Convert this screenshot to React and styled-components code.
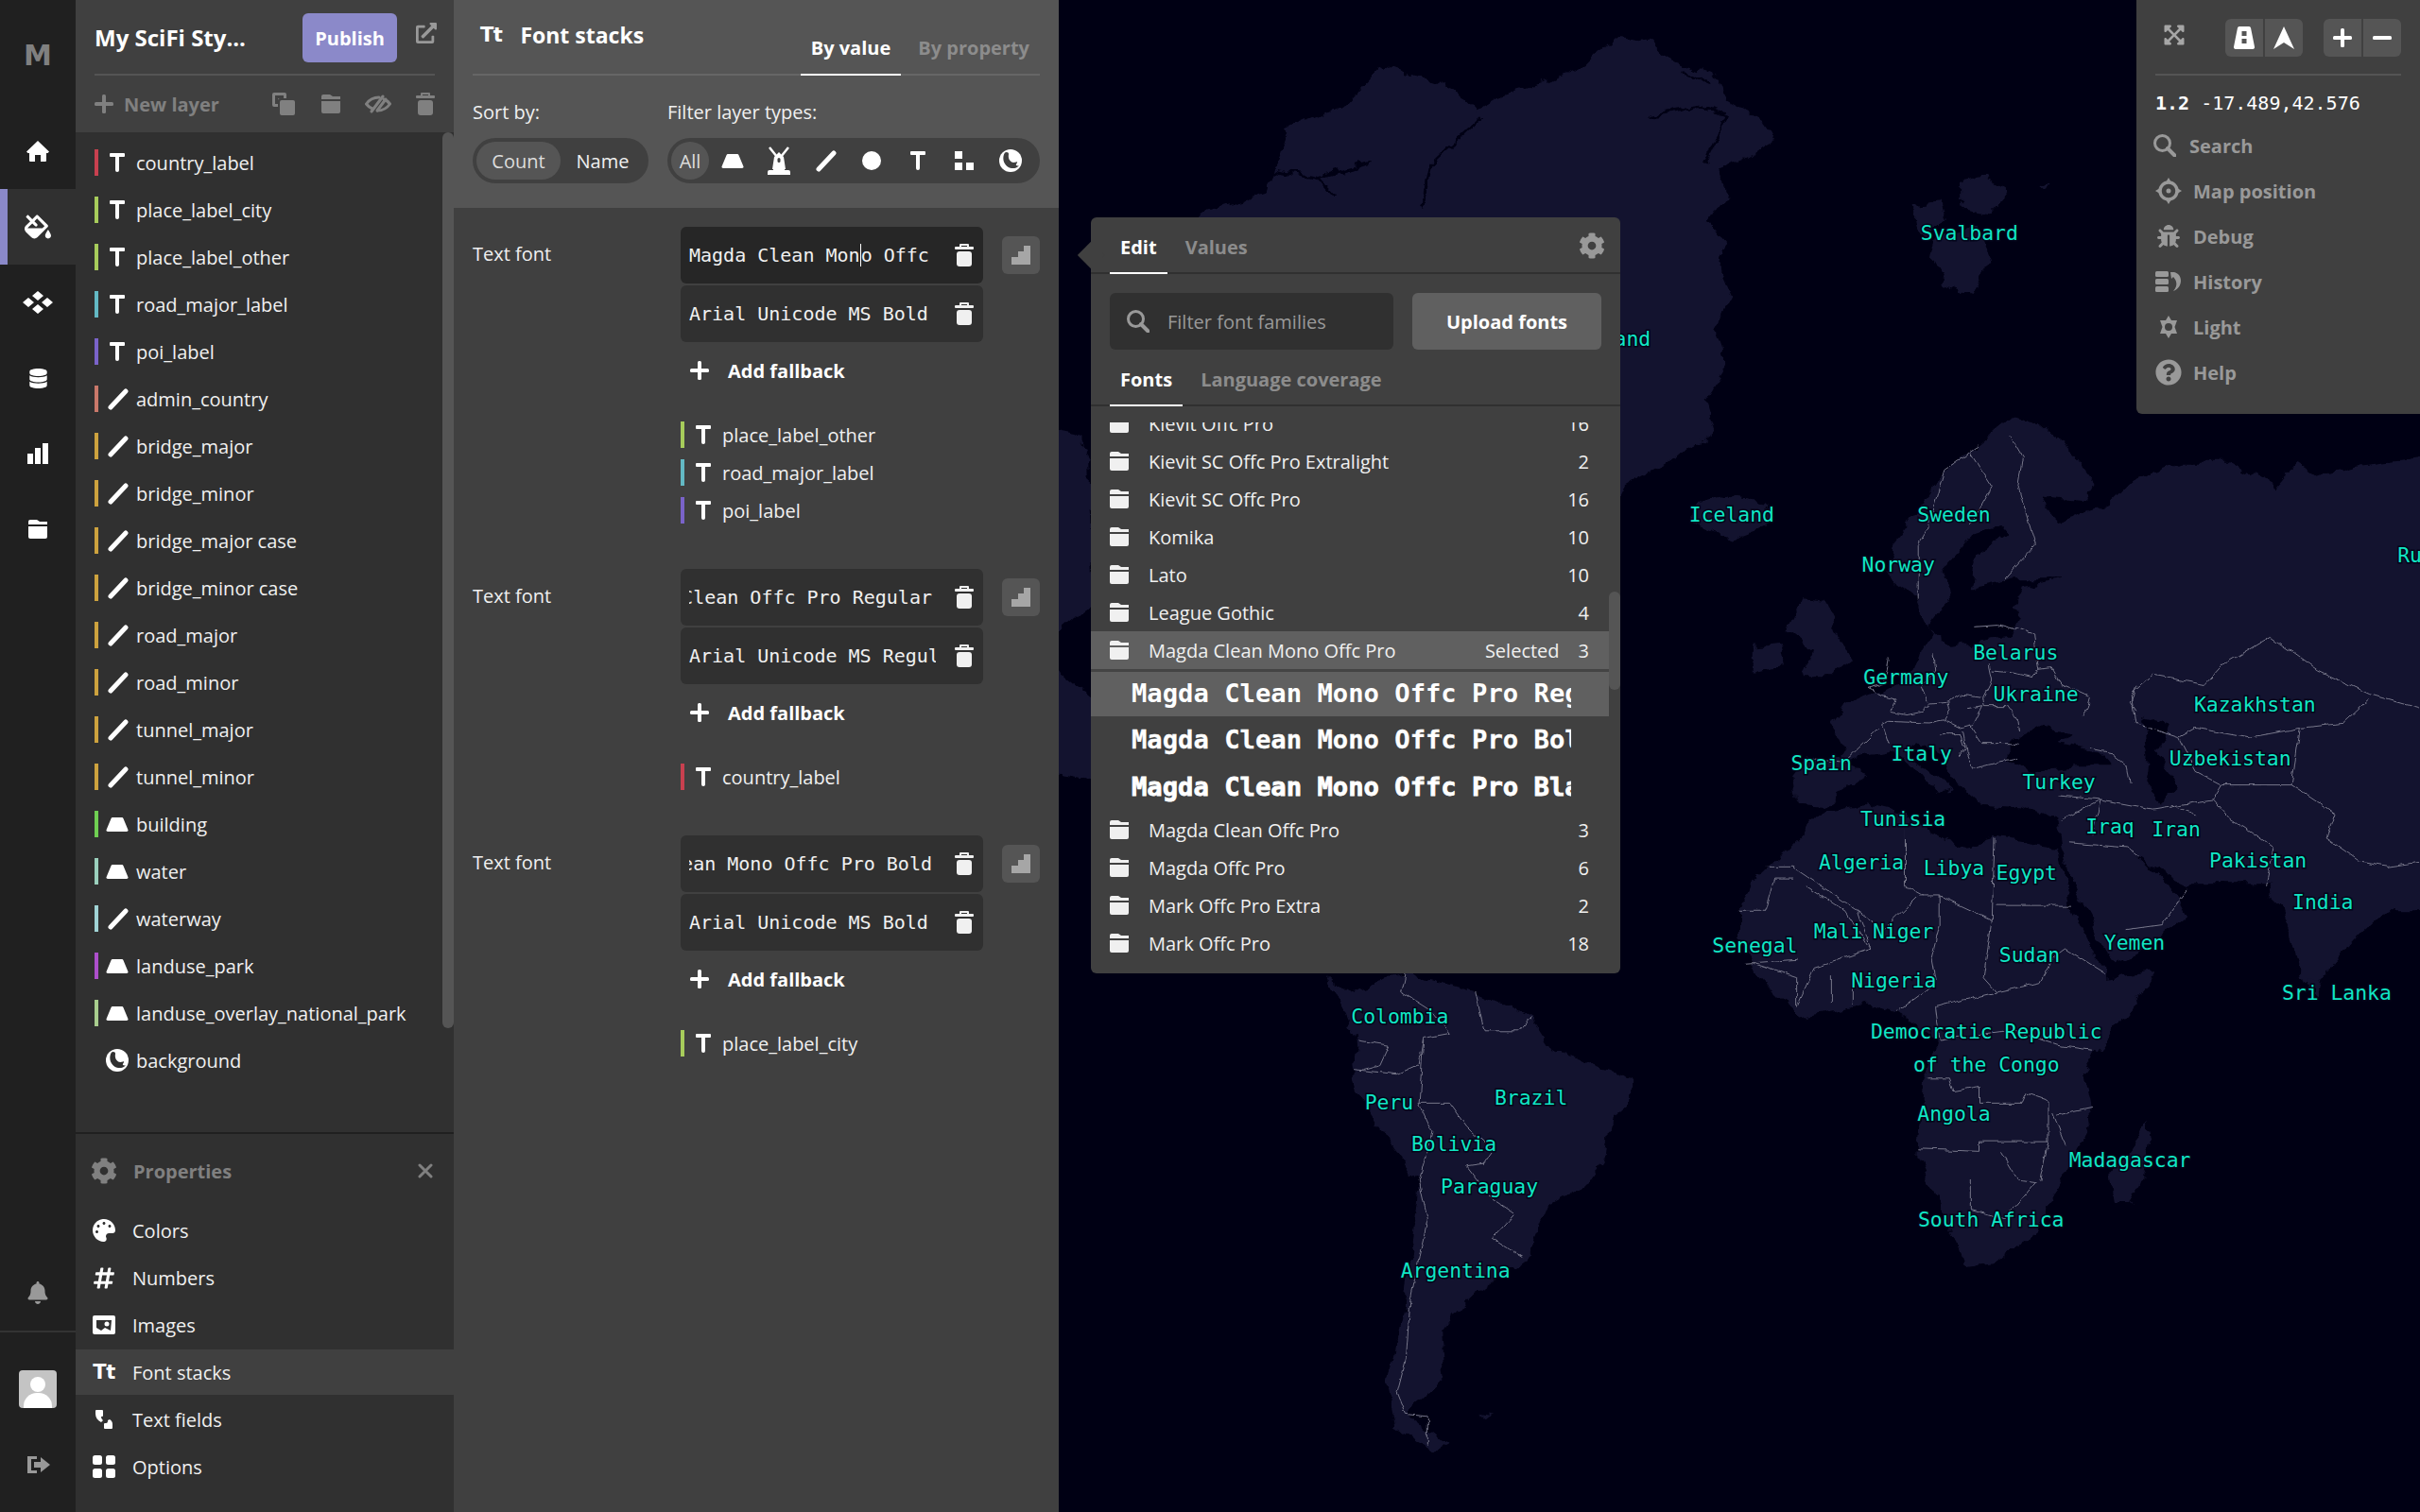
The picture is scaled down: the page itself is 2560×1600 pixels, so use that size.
import React from "react";
import styled, { createGlobalStyle } from "styled-components";
import {
  FaFillDrip, FaDatabase, FaBell, FaCog, FaPalette, FaHashtag,
  FaExternalLinkAlt, FaBug, FaQuestionCircle, FaExpandArrowsAlt,
} from "react-icons/fa";

const SANS = '"Open Sans", "Noto Sans", sans-serif';
const MONO = '"DejaVu Sans Mono", "Liberation Mono", monospace';

const Global = createGlobalStyle`
  html, body { margin: 0; padding: 0; background: #000014; }
  * { box-sizing: border-box; }
  body { font-family: ${SANS}; font-size: 20px; color: #fff; overflow: hidden; }
`;

/* icons */
const Svg = ({ w = 24, h = 24, vb, children }) => (
  <svg width={w} height={h} viewBox={vb || `0 0 ${w} ${h}`} fill="currentColor" style={{ flex: "none", display: "block" }}>
    {children}
  </svg>
);
const Plus = ({ s = 20 }) => (
  <Svg w={s} h={s} vb="0 0 20 20"><rect x="8" y="0" width="4" height="20" rx="1.5" /><rect x="0" y="8" width="20" height="4" rx="1.5" /></Svg>
);
const Minus = () => <Svg w={20} h={20}><rect x="0" y="8" width="20" height="4" rx="1.5" /></Svg>;
const Trash = ({ w = 20, h = 24 }) => (
  <Svg w={w} h={h} vb="0 0 20 24">
    <path d="M6 0h8a1 1 0 0 1 1 1v2h-2V2H7v1H5V1a1 1 0 0 1 1-1z" /><rect x="0" y="3" width="20" height="3" rx="1" /><rect x="2" y="8" width="16" height="16" rx="3" />
  </Svg>
);
const Folder = () => (
  <Svg w={20} h={20}><path d="M0 2a2 2 0 0 1 2-2h7l3 2h8v3H0z" /><path d="M0 7h20v11a2 2 0 0 1-2 2H2a2 2 0 0 1-2-2z" /></Svg>
);
const Copy = () => (
  <Svg w={24} h={24}><path d="M2 0h11a2 2 0 0 1 2 2v4H8a2 2 0 0 0-2 2v7H2a2 2 0 0 1-2-2V2a2 2 0 0 1 2-2z M3 3v9h3V6h6V3z" fillRule="evenodd" /><rect x="8" y="8" width="16" height="16" rx="2" /></Svg>
);
const EyeOff = () => (
  <Svg w={28} h={20}>
    <g fill="none" stroke="currentColor" strokeWidth="3" strokeLinecap="round">
      <path d="M8 15C5 14 3 12 1.500 10 5 5 10 3 15 3" /><path d="M20 5c3 1 5 3 6.500 5-3.500 5-8 7-13 7" />
      <path d="M7 18L19 2" /><path d="M13 17L22 5" />
    </g>
  </Svg>
);
const TIcon = () => <Svg w={24} h={24}><rect x="4" y="2" width="16" height="4" rx="1" /><rect x="10" y="2" width="4" height="20" rx="2" /></Svg>;
const LineIcon = () => <Svg w={24} h={24}><path d="M5 21L21 4" stroke="currentColor" strokeWidth="5" strokeLinecap="round" fill="none" /></Svg>;
const FillIcon = () => <Svg w={24} h={24}><path d="M7 5h10a1.500 1.500 0 0 1 1.400 1l5 12a1.500 1.500 0 0 1-1.400 2H2a1.500 1.500 0 0 1-1.400-2l5-12A1.500 1.500 0 0 1 7 5z" /></Svg>;
const GlobeIcon = ({ dark = "#303030" }) => (
  <Svg w={24} h={24}>
    <circle cx="12" cy="12" r="12" />
    <path d="M6 3.500C3 8 4 15 9 18.500c4 2.500 9 2 12-1-3 .5-4-1-2.500-2.500 1-1 1-2-.5-1.500-3 1-5 .5-6.500-1.500C10 10.500 9.500 8 10 5c.3-1.500-2-2.800-4-1.500z" fill={dark} />
  </Svg>
);
const CircleIcon = () => <Svg w={20} h={24} vb="0 0 20 24"><ellipse cx="10" cy="12" rx="10" ry="10" /></Svg>;
const Squares = () => <Svg w={20} h={20}><rect x="0" y="0" width="8" height="8" /><rect x="0" y="12" width="8" height="8" /><rect x="12" y="12" width="8" height="8" /></Svg>;
const Windmill = () => (
  <Svg w={24} h={30}>
    <path d="M2 1l8 10M22 1l-8 10" stroke="currentColor" strokeWidth="2.500" fill="none" />
    <path d="M12 6l5 5 2 13h-1v1h4a2 2 0 0 1 2 2v3H0v-3a2 2 0 0 1 2-2h4v-1H5l2-13z" />
    <rect x="10.500" y="12" width="3" height="5" rx="1.500" fill="#404040" />
  </Svg>
);
const Stairs = () => <Svg w={20} h={20}><path d="M20 0v20H0v-8h7V6h6V0z" /></Svg>;
const Search = ({ w = 24 }) => (
  <Svg w={w} h={w} vb="0 0 24 24"><circle cx="9.500" cy="9.500" r="8" fill="none" stroke="currentColor" strokeWidth="3" /><path d="M15 15l7.500 7.500" stroke="currentColor" strokeWidth="4" strokeLinecap="round" /></Svg>
);
const Crosshair = () => (
  <Svg w={28} h={28}>
    <circle cx="14" cy="14" r="9" fill="none" stroke="currentColor" strokeWidth="3.500" /><circle cx="14" cy="14" r="2.500" />
    <path d="M14 0l3 5h-6zM14 28l-3-5h6zM0 14l5-3v6zM28 14l-5 3v-6z" />
  </Svg>
);
const HistoryIcon = () => (
  <Svg w={28} h={24}>
    <rect x="0" y="1" width="14" height="6" rx="1.500" /><rect x="0" y="9" width="14" height="6" rx="1.500" /><rect x="0" y="17" width="14" height="6" rx="1.500" />
    <path d="M20 2c4 1 7 4 7 9s-3 9-8 11c3-3 4-7 3-10-.5-2-2-4-3-5l-2 2-1-7z" />
  </Svg>
);
const LightIcon = () => (
  <Svg w={24} h={24}><path d="M12 0l3 5h6l-2.500 7L21 19h-6l-3 5-3-5H3l2.500-7L3 5h6z" /><circle cx="12" cy="12" r="4" fill="#404040" /></Svg>
);
const Diamonds = () => (
  <Svg w={32} h={24} vb="0 0 32 24">
    <path d="M16 0l6 5-6 5-6-5zM6 7l6 5-6 5-6-5zM26 7l6 5-6 5-6-5zM16 14l6 5-6 5-6-5z" />
  </Svg>
);
const Bars = () => <Svg w={24} h={24}><rect x="1" y="12" width="6" height="11" /><rect x="9" y="6" width="6" height="17" /><rect x="17" y="1" width="6" height="22" /></Svg>;
const Home = () => <Svg w={24} h={24}><path d="M12 1l12 11.500-1.500 1.500H21v8a1 1 0 0 1-1 1h-5v-7H9v7H4a1 1 0 0 1-1-1v-8H1.500L0 12.500z" /></Svg>;
const Logout = () => (
  <Svg w={24} h={20}>
    <path d="M0 1h10v3H4v12h6v3H0z" /><path d="M14 2l10 8-10 8v-5H7V7h7z" />
  </Svg>
);
const Cross = () => <Svg w={16} h={16}><path d="M2 2l12 12M14 2L2 14" stroke="currentColor" strokeWidth="3" strokeLinecap="round" /></Svg>;
const ImageIcon = () => (
  <Svg w={24} h={20}>
    <path fillRule="evenodd" d="M2 0h20a2 2 0 0 1 2 2v16a2 2 0 0 1-2 2H2a2 2 0 0 1-2-2V2a2 2 0 0 1 2-2zM4 5v8l5 3 4-3 6 3 1-11z" />
    <circle cx="15" cy="9" r="2.500" />
  </Svg>
);
const TextFields = () => (
  <Svg w={20} h={20}>
    <path d="M2 0h6a1 1 0 0 1 1 1v5a1 1 0 0 1-1 1H7c0 2 1 3 2 4l-2 2C3 11 1 8 1 4V1a1 1 0 0 1 1-1z" />
    <path d="M18 20h-7a1 1 0 0 1-1-1v-4a1 1 0 0 1 1-1h1c2 0 2-2 2-3l2-1c2 1 3 3 3 5v4a1 1 0 0 1-1 1z" />
  </Svg>
);
const Options = () => (
  <Svg w={24} h={24}><rect x="0" y="0" width="10" height="10" rx="2.500" /><rect x="14" y="0" width="10" height="10" rx="2.500" /><rect x="0" y="14" width="10" height="10" rx="2.500" /><rect x="14" y="14" width="10" height="10" rx="2.500" /></Svg>
);
const Lock = () => (
  <Svg w={24} h={24}>
    <path d="M7 0h10a2 2 0 0 1 2 1.500l4 20a2 2 0 0 1-2 2.500H3a2 2 0 0 1-2-2.500l4-20A2 2 0 0 1 7 0z" />
    <rect x="9.500" y="5" width="5" height="5" fill="#555" /><rect x="9.500" y="13" width="5" height="5" fill="#555" />
  </Svg>
);
const North = () => <Svg w={22} h={24}><path d="M11 0l11 24-11-7-11 7z" /></Svg>;

const Shell = styled.div`
  display: grid;
  grid-template-columns: 80px 400px 640px 1fr;
  width: 2560px;
  height: 1600px;
  overflow: hidden;
`;

/* left rail */
const Rail = styled.nav`
  display: flex;
  flex-direction: column;
  background: #202020;
`;
const Logo = styled.div`
  height: 120px;
  padding-top: 35px;
  text-align: center;
  font: 700 30px/48px "DejaVu Sans", sans-serif;
  color: #808080;
`;
const RailItem = styled.div`
  display: flex;
  align-items: center;
  justify-content: center;
  height: 80px;
  color: ${p => p.$dim ? "#999" : "#fff"};
  background: ${p => p.$active ? "#303030" : "transparent"};
  border-left: ${p => p.$active ? "8px solid #8b89c9" : "0"};
  padding-right: ${p => p.$active ? "8px" : "0"};
`;
const RailSpacer = styled.div` flex: 1; `;
const RailDivider = styled.div`
  height: 2px;
  background: #333;
`;
const UserCell = styled.div`
  display: flex;
  justify-content: center;
  padding: 40px 0 20px;
`;
const Avatar = styled.div`
  position: relative;
  width: 40px;
  height: 40px;
  border-radius: 4px;
  overflow: hidden;
  background: #c4c4c4;
`;
const AvatarHead = styled.div`
  position: absolute;
  left: 12px;
  top: 7px;
  width: 16px;
  height: 16px;
  border-radius: 50%;
  background: #fff;
`;
const AvatarBody = styled.div`
  position: absolute;
  left: 5px;
  top: 24px;
  width: 30px;
  height: 24px;
  border-radius: 14px 14px 0 0;
  background: #fff;
`;
const LogoutCell = styled.div`
  display: flex;
  justify-content: center;
  height: 90px;
  padding: 30px 0 0 2px;
  color: #999;
`;

/* layers */
const LayersPanel = styled.aside`
  display: flex;
  flex-direction: column;
  background: #303030;
`;
const LayersHead = styled.header`
  height: 140px;
  background: #404040;
  padding: 0 20px;
`;
const TitleRow = styled.div`
  display: flex;
  align-items: center;
  height: 80px;
  padding-top: 2px;
  border-bottom: 2px solid #555;
`;
const StyleTitle = styled.h1`
  flex: 1;
  margin: 0;
  font-size: 24px;
  line-height: 32px;
  font-weight: 700;
  white-space: nowrap;
`;
const Publish = styled.button`
  width: 100px;
  height: 52px;
  margin-right: 20px;
  padding: 0;
  border: 0;
  border-radius: 6px;
  background: #8b89c9;
  color: #fff;
  font: 700 20px ${SANS};
`;
const ExternalBox = styled.div`
  width: 20px;
  margin-top: -4px;
  color: #999;
`;
const ToolRow = styled.div`
  display: flex;
  align-items: center;
  height: 60px;
  color: #808080;
`;
const NewLayer = styled.div`
  flex: 1;
  display: flex;
  align-items: center;
  gap: 11px;
  font-weight: 700;
`;
const ToolIcons = styled.div`
  display: flex;
  align-items: center;
  gap: 30px;
`;
const ToolCell = styled.div`
  display: flex;
  justify-content: center;
  width: 20px;
`;
const LayerList = styled.div`
  position: relative;
  flex: 1;
  padding: 7px 0 0 20px;
  border-bottom: 2px solid #202020;
`;
const ListScroll = styled.div`
  position: absolute;
  top: 0;
  right: 0;
  width: 12px;
  height: 948px;
  border-radius: 6px;
  background: #555;
`;
const LayerRow = styled.div`
  display: flex;
  align-items: center;
  height: ${p => p.$h}px;
  white-space: nowrap;
  color: #f0f0f0;
`;
const ColorBar = styled.span`
  flex: none;
  width: 4px;
  height: 28px;
  margin-right: 8px;
  background: ${p => p.$color || "transparent"};
`;
const TypeBox = styled.span`
  flex: none;
  display: flex;
  align-items: center;
  justify-content: center;
  width: 24px;
  height: 24px;
  margin-right: 8px;
  color: #fff;
`;
const Props = styled.section`
  height: 400px;
`;
const PropsHead = styled.div`
  display: flex;
  align-items: center;
  height: 78px;
  padding: 0 22px 0 16px;
  color: #808080;
  font-weight: 700;
  gap: 17px;
`;
const PropsTitle = styled.span` flex: 1; `;
const PropsRow = styled.div`
  display: flex;
  align-items: center;
  height: 48px;
  margin-bottom: 2px;
  padding-left: 18px;
  gap: 18px;
  color: #f0f0f0;
  background: ${p => p.$active ? "#404040" : "transparent"};
`;
const PropIcon = styled.span`
  display: flex;
  justify-content: center;
  width: 24px;
  color: #fff;
`;
const TtGlyph = styled.span`
  display: inline-block;
  font: 700 ${p => p.$size || 21}px/24px "DejaVu Sans", sans-serif;
  letter-spacing: -0.5px;
  color: #fff;
`;

/* font stacks */
const Stacks = styled.main`
  display: flex;
  flex-direction: column;
  background: #404040;
`;
const StacksHead = styled.header`
  height: 220px;
  background: #555;
  padding: 0 20px;
`;
const StacksTitleRow = styled.div`
  display: flex;
  justify-content: space-between;
  height: 80px;
  border-bottom: 2px solid #666;
`;
const StacksTitle = styled.h2`
  display: flex;
  align-items: center;
  gap: 19px;
  margin: 0 0 4px;
  padding-left: 8px;
  font-size: 23px;
  font-weight: 700;
`;
const TabRow = styled.div`
  display: flex;
  align-items: flex-end;
  gap: ${p => p.$gap}px;
`;
const Tab = styled.div`
  padding: 0 11px;
  height: ${p => p.$h || 56}px;
  margin-bottom: -2px;
  line-height: ${p => p.$lh || 54}px;
  font-weight: 700;
  white-space: nowrap;
  color: ${p => p.$active ? "#fff" : "#8c8c8c"};
  border-bottom: 2px solid ${p => p.$active ? "#fff" : "transparent"};
`;
const FilterRow = styled.div`
  display: flex;
  gap: 20px;
  padding-top: 22px;
`;
const FilterBlock = styled.div`
  display: flex;
  flex-direction: column;
  gap: 8px;
  flex: ${p => p.$grow ? 1 : "none"};
`;
const FilterLabel = styled.div`
  line-height: 34px;
  height: 36px;
  color: #f0f0f0;
`;
const Pill = styled.div`
  display: flex;
  align-items: center;
  height: 48px;
  padding: 4px;
  border-radius: 24px;
  background: #404040;
  color: #f0f0f0;
`;
const PillOption = styled.div`
  display: flex;
  align-items: center;
  justify-content: center;
  width: ${p => p.$w}px;
  height: 40px;
  border-radius: 20px;
  background: ${p => p.$active ? "#555" : "transparent"};
  color: ${p => p.$active ? "#ddd" : "#f0f0f0"};
`;
const PillIcon = styled.div`
  display: flex;
  align-items: center;
  justify-content: center;
  width: 49px;
  height: 40px;
  color: #fff;
`;
const StackGroups = styled.div`
  padding: 20px 20px 0;
`;
const Group = styled.section`
  display: grid;
  grid-template-columns: 220px 320px 40px;
  column-gap: 0;
  padding-bottom: 42px;
`;
const GroupLabel = styled.div`
  line-height: 58px;
  color: #f0f0f0;
`;
const GroupBody = styled.div`
  display: flex;
  flex-direction: column;
`;
const FontField = styled.div`
  display: flex;
  align-items: center;
  height: 60px;
  margin-bottom: 2px;
  padding: 0 10px 0 9px;
  border-radius: 6px;
  background: ${p => p.$focus ? "#262626" : "#303030"};
  color: #f0f0f0;
`;
const FieldClip = styled.div`
  flex: 1;
  display: flex;
  justify-content: ${p => p.$end ? "flex-end" : "flex-start"};
  overflow: hidden;
  margin-right: 20px;
  padding-right: ${p => p.$end ? 4 : 0}px;
  font: 20px/26px ${MONO};
  white-space: pre;
`;
const FieldText = styled.span` flex: none; `;
const Caret = styled.span`
  display: inline-block;
  width: 0;
  height: 24px;
  vertical-align: -5px;
  border-left: 1px solid #fff;
`;
const AddFallback = styled.div`
  display: flex;
  align-items: center;
  gap: 20px;
  height: 56px;
  padding-left: 10px;
  font-weight: 700;
  margin-bottom: 20px;
`;
const StairButton = styled.div`
  display: flex;
  align-items: center;
  justify-content: center;
  width: 40px;
  height: 40px;
  margin: 10px 0 0 20px;
  border-radius: 6px;
  background: #555;
  color: #a6a6a6;
`;

/* map */
const MapArea = styled.div`
  position: relative;
  overflow: hidden;
  background: #000014;
`;
const MapSvg = styled.svg`
  position: absolute;
  inset: 0;
  width: 100%;
  height: 100%;
`;
const MapLabel = styled.text`
  font: 21.4px ${MONO};
  fill: #10e6c4;
  stroke: #04041a;
  stroke-width: 3px;
  paint-order: stroke;
  text-anchor: middle;
`;

const Popover = styled.div`
  position: absolute;
  left: 34px;
  top: 230px;
  display: flex;
  flex-direction: column;
  width: 560px;
  height: 800px;
  border-radius: 6px;
  background: #404040;
  &::before {
    content: "";
    position: absolute;
    left: -10px;
    top: 30px;
    width: 20px;
    height: 20px;
    background: #404040;
    transform: rotate(45deg);
  }
`;
const PopTabs = styled.div`
  position: relative;
  display: flex;
  justify-content: space-between;
  height: 60px;
  padding: 0 16px 0 20px;
  border-bottom: 2px solid #303030;
`;
const GearBox = styled.div`
  padding-top: 16px;
  color: #999;
`;
const PopSearch = styled.div`
  display: flex;
  gap: 20px;
  padding: 20px;
`;
const FilterInput = styled.div`
  display: flex;
  align-items: center;
  gap: 19px;
  flex: 1;
  height: 60px;
  padding-left: 18px;
  border-radius: 6px;
  background: #303030;
  color: #999;
`;
const Upload = styled.button`
  width: 200px;
  height: 60px;
  padding: 0;
  border: 0;
  border-radius: 6px;
  background: #606060;
  color: #fff;
  font: 700 20px ${SANS};
`;
const PopSubTabs = styled(PopTabs)`
  margin-top: -12px;
  height: 52px;
  justify-content: flex-start;
`;
const FontList = styled.div`
  position: relative;
  flex: 1;
  margin-top: 17px;
  overflow: hidden;
`;
const FontScroll = styled.div`
  position: absolute;
  right: 0;
  top: 179px;
  width: 12px;
  height: 104px;
  border-radius: 6px;
  background: #555;
`;
const FontRows = styled.div`
  margin-top: -19px;
  padding-right: 12px;
`;
const FontFamily = styled.div`
  display: flex;
  align-items: center;
  height: 40px;
  padding: 0 21px 0 20px;
  background: ${p => p.$active ? "#606060" : "transparent"};
  color: #f0f0f0;
`;
const FamilyName = styled.span`
  flex: 1;
  margin-left: 21px;
  white-space: nowrap;
`;
const Selected = styled.span` margin-right: 20px; `;
const FontVariant = styled.div`
  height: 50px;
  padding: 0 40px 0 43px;
  background: ${p => p.$active ? "#606060" : "transparent"};
  border-top: ${p => p.$active ? "3px solid #444" : "0"};
`;
const VariantText = styled.div`
  overflow: hidden;
  font: 700 27.2px/${p => p.$active ? 45 : 50}px ${MONO};
  white-space: pre;
  color: #fff;
  -webkit-text-stroke: ${p => p.$stroke || 0}px #fff;
`;

const MapCtl = styled.div`
  position: absolute;
  right: 0;
  top: 0;
  width: 300px;
  height: 438px;
  padding: 0 20px;
  border-bottom-left-radius: 6px;
  background: #404040;
`;
const CtlTop = styled.div`
  display: flex;
  align-items: center;
  height: 80px;
  padding-top: 2px;
  border-bottom: 2px solid #555;
  color: #a6a6a6;
`;
const ExpandBox = styled.div`
  flex: none;
  width: 74px;
  padding-left: 8px;
`;
const BtnGroup = styled.div`
  flex: none;
  display: flex;
  gap: 2px;
  &:not(:last-child) { margin-right: 22px; }
`;
const CtlBtn = styled.div`
  display: flex;
  align-items: center;
  justify-content: center;
  width: 40px;
  height: 40px;
  background: #555;
  color: #fff;
  &:first-child { border-radius: 6px 0 0 6px; }
  &:last-child { border-radius: 0 6px 6px 0; }
`;
const Coord = styled.div`
  height: 50px;
  padding-top: 14px;
  font: 20px/30px ${MONO};
  white-space: pre;
  b { font-weight: 700; }
`;
const CtlItem = styled.div`
  display: flex;
  align-items: center;
  height: 48px;
  gap: ${p => p.$first ? 14 : 12}px;
  margin-left: ${p => p.$first ? -2 : 0}px;
  color: #999;
  font-weight: 700;
`;
const CtlIcon = styled.span`
  display: flex;
  justify-content: center;
  width: ${p => p.$w || 28}px;
  flex: none;
`;

const LAYERS = [
  ["country_label", "#c8404f", "t"], ["place_label_city", "#a7cc5b", "t"], ["place_label_other", "#a7cc5b", "t"],
  ["road_major_label", "#63b9c4", "t"], ["poi_label", "#7a63c9", "t"], ["admin_country", "#c9786a", "l"],
  ["bridge_major", "#cda23e", "l"], ["bridge_minor", "#cda23e", "l"], ["bridge_major case", "#cda23e", "l"],
  ["bridge_minor case", "#cda23e", "l"], ["road_major", "#cda23e", "l"], ["road_minor", "#cda23e", "l"],
  ["tunnel_major", "#cda23e", "l"], ["tunnel_minor", "#cda23e", "l"], ["building", "#6fcf52", "f"],
  ["water", "#9bd0bd", "f"], ["waterway", "#a0d3d5", "l"], ["landuse_park", "#ad4fcb", "f"],
  ["landuse_overlay_national_park", "#a8cd8e", "f"], ["background", null, "b"],
];
const TypeIcon = ({ t }) => t === "t" ? <TIcon /> : t === "l" ? <LineIcon /> : t === "f" ? <FillIcon /> : <GlobeIcon />;

const STACKS = [
  {
    fields: [{ text: <>Magda Clean Mon<Caret />o Offc Pro Regular</>, focus: true }, { text: "Arial Unicode MS Bold" }],
    layers: [["place_label_other", "#a7cc5b"], ["road_major_label", "#63b9c4"], ["poi_label", "#7a63c9"]],
  },
  {
    fields: [{ text: "Magda Clean Offc Pro Regular", end: true }, { text: "Arial Unicode MS Regular" }],
    layers: [["country_label", "#c8404f"]],
  },
  {
    fields: [{ text: "Magda Clean Mono Offc Pro Bold", end: true }, { text: "Arial Unicode MS Bold" }],
    layers: [["place_label_city", "#a7cc5b"]],
  },
];

const FAMILIES_A = [
  ["Kievit Offc Pro", 16], ["Kievit SC Offc Pro Extralight", 2], ["Kievit SC Offc Pro", 16],
  ["Komika", 10], ["Lato", 10], ["League Gothic", 4],
];
const FAMILIES_B = [["Magda Clean Offc Pro", 3], ["Magda Offc Pro", 6], ["Mark Offc Pro Extra", 2], ["Mark Offc Pro", 18]];

/* label centres, measured on the 1568 wide reference */
const LABELS = [
  ["Greenland", 1034, 220], ["Svalbard", 1276, 151], ["Iceland", 1122, 334], ["Sweden", 1266, 334], ["Norway", 1230, 366],
  ["Belarus", 1306, 423], ["Germany", 1235, 439], ["Ukraine", 1319, 450], ["Kazakhstan", 1461, 457], ["Spain", 1180, 495],
  ["Italy", 1245, 489], ["Uzbekistan", 1445, 492], ["Turkey", 1334, 507], ["Tunisia", 1233, 531], ["Iraq", 1367, 536],
  ["Iran", 1410, 538], ["Algeria", 1206, 559], ["Libya", 1266, 563], ["Egypt", 1313, 566], ["Pakistan", 1463, 558],
  ["India", 1505, 585], ["Senegal", 1137, 613], ["Mali", 1191, 604], ["Niger", 1233, 604], ["Yemen", 1383, 611],
  ["Sudan", 1315, 619], ["Nigeria", 1227, 636], ["Sri Lanka", 1514, 644], ["Democratic Republic", 1287, 669],
  ["of the Congo", 1287, 690], ["Colombia", 907, 659], ["Peru", 900, 715], ["Brazil", 992, 712], ["Angola", 1266, 722],
  ["Madagascar", 1380, 752], ["Bolivia", 942, 742], ["Paraguay", 965, 769], ["South Africa", 1290, 791], ["Argentina", 943, 824],
  ["Russia", 1577, 360],
];

const LAND = "#13132f";
const SEA = "#000014";
const LAND_TOP = [
  "M240,400 262,270 300,240 330,215 372,132 462,190 482,230 520,190 570,165 610,130 640,75 680,85 700,120 760,160 770,210 810,250 825,290 790,330 760,350 770,400 750,460 770,500 760,560 775,620 755,680 770,760 745,830 755,890 725,930 690,970 650,1010 640,1050 400,1000 300,600 140,470 170,440z",
  "M730,1050 770,1030 810,1040 825,1075 800,1100 775,1118 750,1100 730,1085z",
  "M985,425 1015,420 1020,450 1000,490 990,470z",
  "M1040,380 1070,365 1095,395 1075,440 1040,430z",
  "M1010,490 1060,470 1075,540 1050,610 1020,590 1005,540z",
  "M1130,385 1140,378 1136,395z",
  "M-20,885 20,900 35,950 40,1250 -20,1340z",
  "M-20,1360 40,1450 40,1620 -20,1600z",
  "M855,1245 885,1250 895,1310 915,1370 895,1400 860,1400 870,1350 840,1310z",
  "M800,1340 830,1335 835,1380 800,1395z",
  // eurasia
  "M985,1240 955,1200 960,1130 990,1060 1020,975 1060,925 1095,870 1130,880 1170,940 1195,1000 1180,1040 1130,1030 1150,1080 1210,1045 1235,1000 1290,960 1345,960 1400,1010 1425,960 1450,990 1500,965 1600,945 1600,1888 1530,1888 1500,1938 1470,1998 1450,2040 1435,2038 1420,1948 1410,1888 1390,1853 1400,1833 1340,1833 1300,1833 1265,1803 1240,1773 1285,1853 1298,1898 1260,1958 1215,1998 1205,1968 1175,1868 1155,1758 1150,1698 1110,1675 1060,1670 1060,1665 1035,1625 1020,1575 990,1545 975,1560 1010,1610 1030,1640 1010,1650 985,1590 960,1555 930,1565 905,1580 930,1610 905,1640 880,1670 850,1665 845,1610 860,1575 900,1570 905,1555 890,1500 905,1460 950,1430 985,1395 995,1340 1010,1320 1000,1300 1025,1340 1060,1330 1095,1320 1105,1280 1100,1260 1110,1215 1160,1200 1100,1200 1050,1220 1060,1150 1095,1110 1085,1090 1050,1110 1020,1170 1030,1230 1000,1300z",
  // africa
  "M785,1888 800,1828 850,1743 880,1683 930,1668 975,1688 1000,1718 1040,1758 1080,1738 1150,1758 1165,1878 1195,1988 1210,2028 1265,2013 1250,2058 1205,2158 1180,2228 1190,2328 1175,2378 1155,2448 1125,2558 1080,2618 1040,2628 1030,2568 990,2398 995,2248 1010,2158 965,2098 930,2083 855,2108 800,2008 785,1943z",
  "M1255,2318 1260,2368 1235,2493 1215,2493 1210,2438 1245,2358z",
  "M1440,2030 1452,2040 1448,2062 1436,2056z",
  // south america
  "M305,2018 330,2058 360,2038 400,2018 480,2058 545,2108 570,2178 660,2238 660,2288 635,2328 630,2398 610,2453 565,2498 540,2608 470,2698 440,2768 445,2858 400,2928 445,2993 430,3008 390,2963 380,2868 400,2698 405,2608 415,2448 385,2378 345,2268 340,2208 345,2158 330,2098z",
  "M480,2928 500,2933 490,2940z",
];
const WATER = [
  "M1095,1540 1130,1510 1170,1520 1150,1545 1200,1560 1215,1590 1170,1590 1120,1600 1095,1575z",
  "M1250,1490 1280,1505 1265,1560 1290,1630 1270,1665 1250,1630 1255,1570z",
];
const FJORDS = [
  "M240,350 300,370 360,340", "M300,370 320,410", "M680,240 740,220 770,240 745,335", "M490,240 430,340 420,430",
  "M745,170 720,150",
];
const BORDERS = [
  // south america
  "M400,2018 395,2058 430,2098 450,2143 420,2153 415,2208 390,2228 340,2218", "M345,2158 380,2168 370,2208 350,2218",
  "M480,2058 490,2138 530,2138 545,2108", "M420,2158 415,2288 450,2288 470,2338 500,2388 490,2413 470,2418 500,2488 525,2518 500,2568 535,2608",
  "M415,2288 430,2348 415,2448 425,2528 415,2608 405,2698 400,2818 390,2888 400,2933 425,2938 425,2998",
  // africa
  "M815,1798 845,1798 920,1888 935,1968 870,2008 850,2088", "M785,1888 815,1888 825,1823 845,1823",
  "M920,1888 950,1928 990,1858 1015,1858 1075,1908 1078,1738", "M1078,1878 1165,1878", "M975,1718 975,1838 995,1858",
  "M1015,1858 1015,1918 1005,1988 1010,2038 965,2098", "M1075,1908 1065,2028 1080,2058 1130,2038 1145,1988 1160,1968 1205,2018",
  "M1080,2058 1010,2088 1015,2158 1100,2138 1150,2168 1190,2178", "M1000,2238 1025,2238 1030,2263 1060,2253 1060,2288 1110,2288 1115,2268 1140,2283 1140,2368 1060,2368 1060,2388 990,2383",
  "M1050,2448 1050,2508 1090,2528 1125,2453 1105,2448 1085,2388", "M1140,2368 1130,2448", "M1150,2313 1190,2298", "M1145,2308 1160,2378",
  "M800,1998 850,2028 850,2088", "M890,2023 890,2083", "M915,2018 915,2083", "M850,1990 790,1998", "M860,1838 905,1890 935,1970",
  // middle east, central asia
  "M1165,1748 1230,1758 1245,1773", "M1190,1733 1200,1658", "M1230,1928 1270,1918 1300,1848",
  "M1200,1658 1260,1678 1330,1658 1350,1698 1400,1758 1390,1838", "M1330,1658 1340,1628 1420,1628 1470,1688 1460,1738 1500,1788 1530,1798 1568,1788",
  "M1155,1700 1200,1658 1150,1650", "M1280,1668 1310,1690",
  "M1235,1440 1260,1400 1320,1420 1340,1380 1395,1320 1450,1390 1510,1440 1568,1470", "M1235,1440 1240,1500 1290,1530 1310,1510 1370,1530 1430,1510 1480,1500 1510,1450",
  "M1290,1530 1310,1600 1340,1628", "M1430,1510 1420,1628",
  // scandinavia
  "M1060,925 1020,975 1000,1100 990,1130 990,1240", "M1095,905 1110,950 1105,1010 1125,1130 1090,1200", "M1050,940 1075,1010 1050,1090",
  "M860,1575 905,1580", "M905,1580 945,1510",
];
/* central europe, traced at 3x around 1940,640 */
const EUROPE = [
  "M445,70 520,65 575,80 580,70 635,90 640,140 650,205 630,230 560,215 500,210",
  "M650,205 690,200 720,250 770,270 815,290 805,330 790,355",
  "M490,190 500,240 470,300 475,320 550,320 585,370 590,405",
  "M470,320 440,380 400,390 350,365 300,375 170,370 155,380 175,440",
  "M175,170 160,250 105,265 155,290 195,300 180,340 230,350 280,340 305,315 360,310 400,285 470,295",
  "M315,150 320,210 280,260 300,310", "M365,310 370,330 350,365", "M420,330 470,320",
  "M430,380 470,440 560,440 590,445", "M410,400 420,470 440,520 480,510 580,490", "M340,410 400,410 415,460 400,480",
  "M810,455 880,470 930,510 940,570", "M960,260 940,310 960,340",
];

const App = () => (
  <>
    <Global />
    <Shell>
      <Rail>
        <Logo>M</Logo>
        <RailItem><Home /></RailItem>
        <RailItem $active><FaFillDrip size={28} /></RailItem>
        <RailItem><Diamonds /></RailItem>
        <RailItem><FaDatabase size={21} /></RailItem>
        <RailItem><Bars /></RailItem>
        <RailItem><Folder /></RailItem>
        <RailSpacer />
        <RailItem $dim><FaBell size={24} /></RailItem>
        <RailDivider />
        <UserCell>
          <Avatar><AvatarHead /><AvatarBody /></Avatar>
        </UserCell>
        <LogoutCell><Logout /></LogoutCell>
      </Rail>

      <LayersPanel>
        <LayersHead>
          <TitleRow>
            <StyleTitle>My SciFi Sty...</StyleTitle>
            <Publish>Publish</Publish>
            <ExternalBox><FaExternalLinkAlt size={22} /></ExternalBox>
          </TitleRow>
          <ToolRow>
            <NewLayer><Plus />New layer</NewLayer>
            <ToolIcons>
              <ToolCell><Copy /></ToolCell>
              <ToolCell><Folder /></ToolCell>
              <ToolCell><EyeOff /></ToolCell>
              <ToolCell><Trash /></ToolCell>
            </ToolIcons>
          </ToolRow>
        </LayersHead>
        <LayerList>
          <ListScroll />
          {LAYERS.map(([name, color, t]) => (
            <LayerRow key={name} $h={50}>
              <ColorBar $color={color} />
              <TypeBox><TypeIcon t={t} /></TypeBox>
              {name}
            </LayerRow>
          ))}
        </LayerList>
        <Props>
          <PropsHead>
            <FaCog size={28} />
            <PropsTitle>Properties</PropsTitle>
            <Cross />
          </PropsHead>
          <PropsRow><PropIcon><FaPalette size={26} /></PropIcon>Colors</PropsRow>
          <PropsRow><PropIcon><FaHashtag size={25} /></PropIcon>Numbers</PropsRow>
          <PropsRow><PropIcon><ImageIcon /></PropIcon>Images</PropsRow>
          <PropsRow $active><PropIcon><TtGlyph>Tt</TtGlyph></PropIcon>Font stacks</PropsRow>
          <PropsRow><PropIcon><TextFields /></PropIcon>Text fields</PropsRow>
          <PropsRow><PropIcon><Options /></PropIcon>Options</PropsRow>
        </Props>
      </LayersPanel>

      <Stacks>
        <StacksHead>
          <StacksTitleRow>
            <StacksTitle><TtGlyph>Tt</TtGlyph>Font stacks</StacksTitle>
            <TabRow $gap={7}>
              <Tab $active>By value</Tab>
              <Tab>By property</Tab>
            </TabRow>
          </StacksTitleRow>
          <FilterRow>
            <FilterBlock>
              <FilterLabel>Sort by:</FilterLabel>
              <Pill>
                <PillOption $w={89} $active>Count</PillOption>
                <PillOption $w={89}>Name</PillOption>
              </Pill>
            </FilterBlock>
            <FilterBlock $grow>
              <FilterLabel>Filter layer types:</FilterLabel>
              <Pill>
                <PillOption $w={40} $active>All</PillOption>
                <PillIcon><FillIcon /></PillIcon>
                <PillIcon><Windmill /></PillIcon>
                <PillIcon><LineIcon /></PillIcon>
                <PillIcon><CircleIcon /></PillIcon>
                <PillIcon><TIcon /></PillIcon>
                <PillIcon><Squares /></PillIcon>
                <PillIcon><GlobeIcon dark="#404040" /></PillIcon>
              </Pill>
            </FilterBlock>
          </FilterRow>
        </StacksHead>
        <StackGroups>
          {STACKS.map((g, i) => (
            <Group key={i}>
              <GroupLabel>Text font</GroupLabel>
              <GroupBody>
                {g.fields.map((f, j) => (
                  <FontField key={j} $focus={f.focus}>
                    <FieldClip $end={f.end}><FieldText>{f.text}</FieldText></FieldClip>
                    <Trash />
                  </FontField>
                ))}
                <AddFallback><Plus />Add fallback</AddFallback>
                {g.layers.map(([name, color]) => (
                  <LayerRow key={name} $h={40}>
                    <ColorBar $color={color} />
                    <TypeBox><TIcon /></TypeBox>
                    {name}
                  </LayerRow>
                ))}
              </GroupBody>
              <StairButton><Stairs /></StairButton>
            </Group>
          ))}
        </StackGroups>
      </Stacks>

      <MapArea>
        <MapSvg viewBox="1120 0 1440 1600" preserveAspectRatio="none">
          <defs>
            <filter id="coast" x="-5%" y="-5%" width="110%" height="110%" colorInterpolationFilters="sRGB">
              <feTurbulence type="fractalNoise" baseFrequency="0.05" numOctaves="4" seed="7" />
              <feDisplacementMap in="SourceGraphic" scale="16" xChannelSelector="R" yChannelSelector="G" />
            </filter>
            <filter id="border" x="-5%" y="-5%" width="110%" height="110%" colorInterpolationFilters="sRGB">
              <feTurbulence type="fractalNoise" baseFrequency="0.09" numOctaves="2" seed="3" />
              <feDisplacementMap in="SourceGraphic" scale="6" xChannelSelector="R" yChannelSelector="G" />
            </filter>
          </defs>
          {/* land is traced in a stretched frame, x 1568 and y 3136 units */}
          <g filter="url(#coast)">
            <g transform="translate(1120,0) scale(0.9184,0.5102)">
              {LAND_TOP.map((d, i) => <path key={i} d={d} fill={LAND} />)}
              {WATER.map((d, i) => <path key={i} d={d} fill={SEA} />)}
              {FJORDS.map((d, i) => <path key={i} d={d} fill="none" stroke={SEA} strokeWidth="3" vectorEffect="non-scaling-stroke" />)}
            </g>
          </g>
          <g filter="url(#border)" fill="none" stroke="#77778a" strokeWidth="1">
            <g transform="translate(1120,0) scale(0.9184,0.5102)">
              {BORDERS.map((d, i) => <path key={i} d={d} vectorEffect="non-scaling-stroke" />)}
            </g>
            <g transform="translate(1940,640) scale(0.3333)">
              {EUROPE.map((d, i) => <path key={i} d={d} vectorEffect="non-scaling-stroke" />)}
            </g>
          </g>
          {LABELS.map(([text, x, y]) => (
            <MapLabel key={text} x={x * 1.6327} y={y * 1.6327 + 7}>{text}</MapLabel>
          ))}
        </MapSvg>

        <Popover>
          <PopTabs>
            <TabRow $gap={8}>
              <Tab $active $h={58} $lh={60}>Edit</Tab>
              <Tab $h={58} $lh={60}>Values</Tab>
            </TabRow>
            <GearBox><FaCog size={28} /></GearBox>
          </PopTabs>
          <PopSearch>
            <FilterInput><Search />Filter font families</FilterInput>
            <Upload>Upload fonts</Upload>
          </PopSearch>
          <PopSubTabs>
            <TabRow $gap={8}>
              <Tab $active $h={50} $lh={44}>Fonts</Tab>
              <Tab $h={50} $lh={44}>Language coverage</Tab>
            </TabRow>
          </PopSubTabs>
          <FontList>
            <FontScroll />
            <FontRows>
              {FAMILIES_A.map(([name, n]) => (
                <FontFamily key={name}><Folder /><FamilyName>{name}</FamilyName>{n}</FontFamily>
              ))}
              <FontFamily $active><Folder /><FamilyName>Magda Clean Mono Offc Pro</FamilyName><Selected>Selected</Selected>3</FontFamily>
              <FontVariant $active><VariantText $active>Magda Clean Mono Offc Pro Regular</VariantText></FontVariant>
              <FontVariant><VariantText $stroke={0.3}>Magda Clean Mono Offc Pro Bold</VariantText></FontVariant>
              <FontVariant><VariantText $stroke={0.8}>Magda Clean Mono Offc Pro Black</VariantText></FontVariant>
              {FAMILIES_B.map(([name, n]) => (
                <FontFamily key={name}><Folder /><FamilyName>{name}</FamilyName>{n}</FontFamily>
              ))}
            </FontRows>
          </FontList>
        </Popover>

        <MapCtl>
          <CtlTop>
            <ExpandBox><FaExpandArrowsAlt size={24} /></ExpandBox>
            <BtnGroup>
              <CtlBtn><Lock /></CtlBtn>
              <CtlBtn><North /></CtlBtn>
            </BtnGroup>
            <BtnGroup>
              <CtlBtn><Plus /></CtlBtn>
              <CtlBtn><Minus /></CtlBtn>
            </BtnGroup>
          </CtlTop>
          <Coord><b>1.2</b> -17.489,42.576</Coord>
          <CtlItem $first><CtlIcon $w={24}><Search /></CtlIcon>Search</CtlItem>
          <CtlItem><CtlIcon><Crosshair /></CtlIcon>Map position</CtlItem>
          <CtlItem><CtlIcon><FaBug size={24} /></CtlIcon>Debug</CtlItem>
          <CtlItem><CtlIcon><HistoryIcon /></CtlIcon>History</CtlItem>
          <CtlItem><CtlIcon><LightIcon /></CtlIcon>Light</CtlItem>
          <CtlItem><CtlIcon><FaQuestionCircle size={28} /></CtlIcon>Help</CtlItem>
        </MapCtl>
      </MapArea>
    </Shell>
  </>
);

export default App;
